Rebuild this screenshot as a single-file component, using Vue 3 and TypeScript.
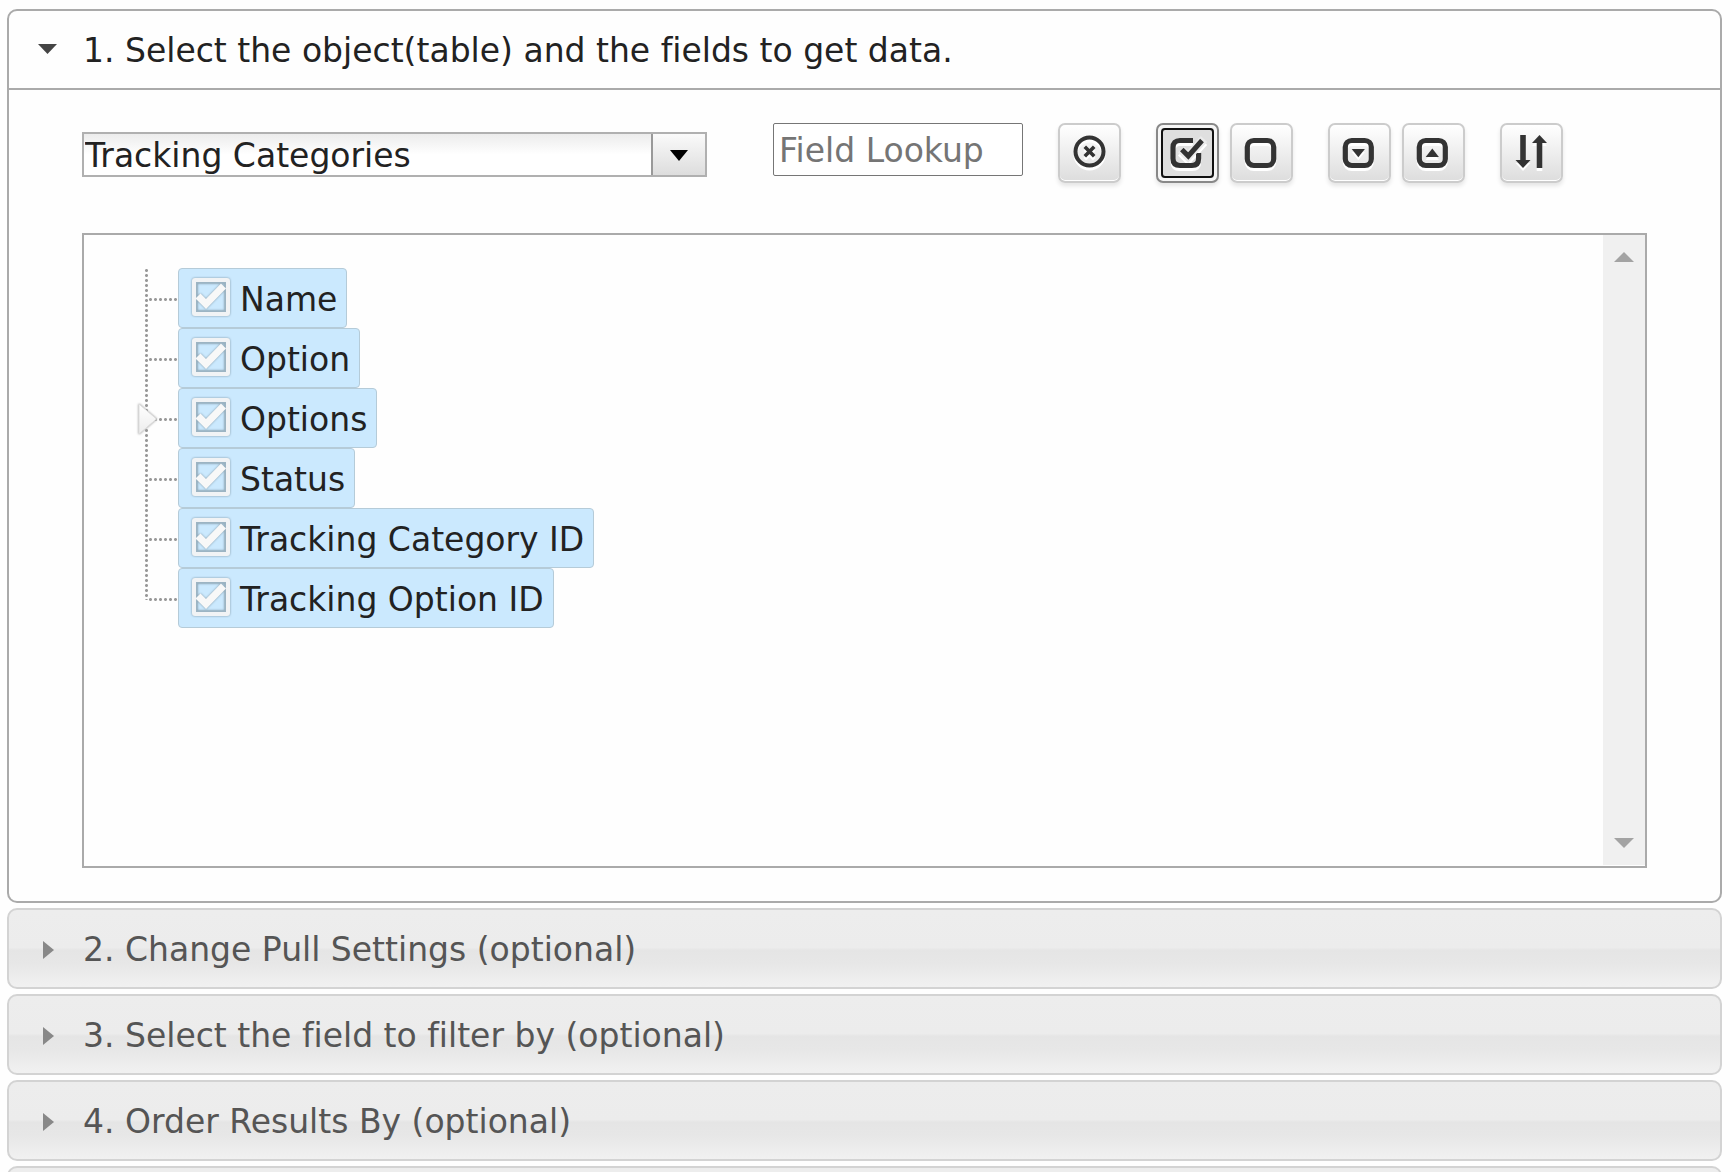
<script setup lang="ts">
import { ref } from 'vue'

interface Field {
  id: string
  label: string
  checked: boolean
  expandable?: boolean
}

const fields = ref<Field[]>([
  { id: 'name', label: 'Name', checked: true },
  { id: 'option', label: 'Option', checked: true },
  { id: 'options', label: 'Options', checked: true, expandable: true },
  { id: 'status', label: 'Status', checked: true },
  { id: 'category-id', label: 'Tracking Category ID', checked: true },
  { id: 'option-id', label: 'Tracking Option ID', checked: true },
])

const table = ref('Tracking Categories')
const lookup = ref('')

const collapsed: string[] = [
  '2. Change Pull Settings (optional)',
  '3. Select the field to filter by (optional)',
  '4. Order Results By (optional)',
  '',
]

function setAll(value: boolean): void {
  fields.value.forEach((f) => (f.checked = value))
}
</script>

<template>
  <main class="accordion">
    <section class="open">
      <h3 class="heading">
        <button type="button" class="header header-active" aria-expanded="true">
          <svg class="marker" viewBox="0 0 20 25" aria-hidden="true"><path d="M0 7H19L9.500 17Z" fill="#444" /></svg>
          <span>1. Select the object(table) and the fields to get data.</span>
        </button>
      </h3>
      <div class="content">
        <div class="toolbar">
          <div class="combo">
            <select v-model="table" aria-label="Object">
              <option>Tracking Categories</option>
            </select>
            <span class="combo-arrow" aria-hidden="true">
              <svg viewBox="0 0 18 12"><path d="M0 0H18L9 11Z" fill="#000" /></svg>
            </span>
          </div>
          <input v-model="lookup" class="lookup" type="text" placeholder="Field Lookup" aria-label="Field Lookup" />
          <div class="group">
            <button type="button" class="tool" aria-label="Clear lookup" @click="lookup = ''">
              <svg viewBox="0 0 35 36">
                <circle cx="17.500" cy="16.500" r="14" fill="none" stroke="#333" stroke-width="4" />
                <path d="M12.800 11.800L22.200 21.200M22.200 11.800L12.800 21.200" stroke="#333" stroke-width="3.600" />
              </svg>
            </button>
          </div>
          <div class="group">
            <button type="button" class="tool tool-focus" aria-label="Check all" @click="setAll(true)">
              <svg viewBox="0 0 35 36">
                <path d="M23 5.500H10Q3 5.500 3 12.500V23.500Q3 30.500 10 30.500H22Q28.600 30.500 28.600 23.500V18" fill="none" stroke="#333" stroke-width="5.200" />
                <path d="M11 14.500L18 21.500L34 4" fill="none" stroke="#ebebeb" stroke-width="8.600" />
                <path d="M11.800 14.500L18.300 21L32 5.500" fill="none" stroke="#333" stroke-width="5" />
              </svg>
            </button>
            <button type="button" class="tool" aria-label="Uncheck all" @click="setAll(false)">
              <svg viewBox="0 0 35 36">
                <rect x="3.300" y="5.500" width="26.400" height="25" rx="6.500" fill="none" stroke="#333" stroke-width="5.200" />
              </svg>
            </button>
          </div>
          <div class="group">
            <button type="button" class="tool" aria-label="Expand all">
              <svg viewBox="0 0 35 36">
                <rect x="3.300" y="5.500" width="26" height="25" rx="6.500" fill="none" stroke="#333" stroke-width="5.200" />
                <path d="M9.700 14H22.900L16.300 22.300Z" fill="#333" />
              </svg>
            </button>
            <button type="button" class="tool" aria-label="Collapse all">
              <svg viewBox="0 0 35 36">
                <rect x="3.300" y="5.500" width="26" height="25" rx="6.500" fill="none" stroke="#333" stroke-width="5.200" />
                <path d="M9.700 22H22.900L16.300 13.500Z" fill="#333" />
              </svg>
            </button>
          </div>
          <div class="group">
            <button type="button" class="tool" aria-label="Sort fields">
              <svg viewBox="0 0 35 36">
                <path d="M6.200 0H11.800V25H16.500L9 33L1.500 25H6.200Z M22.700 33H28.300V8H33L25.500 0L18 8H22.700Z" fill="#333" />
              </svg>
            </button>
          </div>
        </div>

        <div class="panel">
          <ul class="tree">
            <li v-for="field in fields" :key="field.id" class="node">
              <svg v-if="field.expandable" class="expander" viewBox="0 0 22 34" aria-hidden="true">
                <defs>
                  <linearGradient id="expander-fill" x1="0" y1="0" x2="0" y2="1">
                    <stop offset="0" stop-color="#fff" />
                    <stop offset="1" stop-color="#ececec" />
                  </linearGradient>
                </defs>
                <path d="M2 2V32L19.500 17Z" fill="url(#expander-fill)" stroke="#ddd" stroke-width="1" stroke-linejoin="round" />
              </svg>
              <label class="item">
                <input v-model="field.checked" type="checkbox" />
                <svg class="box" viewBox="0 0 42 42" aria-hidden="true">
                  <rect x="6.500" y="6.500" width="29" height="29" fill="none" stroke="#9cb4c3" stroke-width="2" />
                  <rect x="4" y="4" width="34" height="34" rx="1" fill="none" stroke="#f1f3f5" stroke-width="4" />
                  <path v-if="field.checked" d="M8 20L16 28L33.500 10" fill="none" stroke="#f8f8f8" stroke-width="7" />
                </svg>
                <span>{{ field.label }}</span>
              </label>
            </li>
          </ul>
          <div class="scrollbar" aria-hidden="true">
            <svg viewBox="0 0 20 10"><path d="M0 10H20L10 0Z" fill="#a3a3a3" /></svg>
            <svg viewBox="0 0 20 10"><path d="M0 0H20L10 10Z" fill="#a3a3a3" /></svg>
          </div>
        </div>
      </div>
    </section>

    <h3 v-for="(title, i) in collapsed" :key="i" class="heading">
      <button type="button" class="header" aria-expanded="false">
        <svg class="marker" viewBox="0 0 20 25" aria-hidden="true"><path d="M5 5V23L16 14Z" fill="#888" /></svg>
        <span>{{ title }}</span>
      </button>
    </h3>
  </main>
</template>

<style>
body {
  margin: 0;
  background: #fefefe;
  overflow: hidden;
}
</style>

<style scoped>
* {
  box-sizing: border-box;
}

.accordion {
  display: flex;
  flex-direction: column;
  gap: 5px;
  height: 100vh;
  overflow: hidden;
  padding: 9px 8px 0 7px;
  font-family: Verdana, "DejaVu Sans", sans-serif;
  font-size: 33px;
  font-variant-ligatures: none;
  line-height: 40px;
  color: #222;
}

.open,
.heading {
  flex-shrink: 0;
}

.heading {
  margin: 0;
  font-size: inherit;
  font-weight: normal;
}

.header {
  display: flex;
  align-items: center;
  gap: 25px;
  width: 100%;
  height: 81px;
  padding: 0 29px;
  border: 2px solid #d3d3d3;
  border-radius: 10px;
  background: linear-gradient(#ededed 0, #ececec 49%, #e5e5e5 52%, #e7e7e7 70%, #f1f1f1 100%);
  color: #555;
  font: inherit;
  text-align: left;
}

.header span {
  padding-top: 2px;
}

.header-active {
  border-color: #aaa;
  border-radius: 10px 10px 0 0;
  background: #fefefe;
  color: #222;
}

.marker {
  width: 20px;
  height: 25px;
  flex: none;
}

.content {
  padding: 33px 73px 33px;
  border: 2px solid #aaa;
  border-top: 0;
  border-radius: 0 0 10px 10px;
}

.toolbar {
  display: flex;
  align-items: flex-start;
  gap: 35px;
}

.combo {
  display: grid;
  grid-template-columns: 1fr 54px;
  width: 625px;
  height: 45px;
  margin: 9px 31px 0 0;
  border: 2px solid #b0b0b0;
  background: linear-gradient(#ececec, #fff 50%);
}

.combo select {
  grid-area: 1 / 1 / 2 / 3;
  appearance: none;
  min-width: 0;
  padding: 2px 54px 0 1px;
  border: 0;
  background: transparent;
  color: #222;
  font: inherit;
}

.combo-arrow {
  grid-area: 1 / 2;
  display: flex;
  align-items: center;
  justify-content: center;
  margin-bottom: 1px;
  padding-top: 2px;
  border-left: 2px solid #999;
  background: linear-gradient(#fafafa, #ddd);
  pointer-events: none;
}

.combo-arrow svg {
  width: 18px;
  height: 12px;
}

.lookup {
  width: 250px;
  height: 53px;
  padding: 2px 5px 0;
  border: 1px solid #767676;
  border-radius: 2px;
  background: #fff;
  color: #222;
  font: inherit;
}

.lookup::placeholder {
  color: #757575;
  opacity: 1;
}

.group {
  display: flex;
  gap: 11px;
}

.tool {
  position: relative;
  display: flex;
  align-items: center;
  justify-content: center;
  width: 63px;
  height: 60px;
  padding: 0;
  border: 2px solid #ccc;
  border-radius: 7px;
  background: linear-gradient(#fff, #ddd);
  box-shadow: inset 0 -1px 0 #fff, 0 3px 4px rgba(0, 0, 0, 0.1);
}

.tool svg {
  width: 35px;
  height: 36px;
  overflow: visible;
  filter: drop-shadow(0 3px 0 #fff);
}

.tool-focus {
  border-color: #888;
  background: #dfdfdf;
  box-shadow: inset 0 0 0 3px #f6f6f6, 0 3px 4px rgba(0, 0, 0, 0.1);
}

.tool-focus::after {
  content: "";
  position: absolute;
  inset: 3px;
  border: 2px solid #111;
  border-radius: 4px;
}

.panel {
  display: flex;
  justify-content: space-between;
  height: 635px;
  margin-top: 50px;
  border: 2px solid #aaa;
}

.tree {
  margin: 0;
  padding: 33px 0 0 61px;
  list-style: none;
}

.node {
  position: relative;
  display: flex;
  height: 60px;
  padding-left: 33px;
}

.node::before {
  content: "";
  position: absolute;
  top: 0;
  left: 0;
  width: 3px;
  height: 60px;
  background: radial-gradient(circle, #999 1px, transparent 2px) 0 0 / 3px 5px;
}

.node:last-child::before {
  height: 32px;
}

.node::after {
  content: "";
  position: absolute;
  top: 30px;
  left: 3px;
  width: 30px;
  height: 3px;
  background: radial-gradient(circle, #999 1px, transparent 2px) 0 0 / 5px 3px;
}

.expander {
  position: absolute;
  z-index: 1;
  top: 14px;
  left: -8px;
  width: 22px;
  height: 34px;
  filter: drop-shadow(0 0 1px #999);
}

.item {
  display: flex;
  align-items: center;
  gap: 8px;
  height: 60px;
  padding: 0 9px 0 11px;
  border: 1px solid #b5cbd8;
  border-radius: 4px;
  background: #cbe9fe;
  white-space: nowrap;
}

.item span {
  padding-top: 3px;
}

.item input {
  position: absolute;
  width: 42px;
  height: 42px;
  margin: 0;
  opacity: 0;
}

.box {
  width: 42px;
  height: 42px;
  margin-bottom: 3px;
  filter: drop-shadow(0 0 1px #7f97a6);
}

.scrollbar {
  display: flex;
  flex-direction: column;
  justify-content: space-between;
  align-items: center;
  width: 42px;
  margin-bottom: 1px;
  padding: 17px 0;
  background: #f0f0f0;
}

.scrollbar svg {
  width: 20px;
  height: 10px;
}
</style>
